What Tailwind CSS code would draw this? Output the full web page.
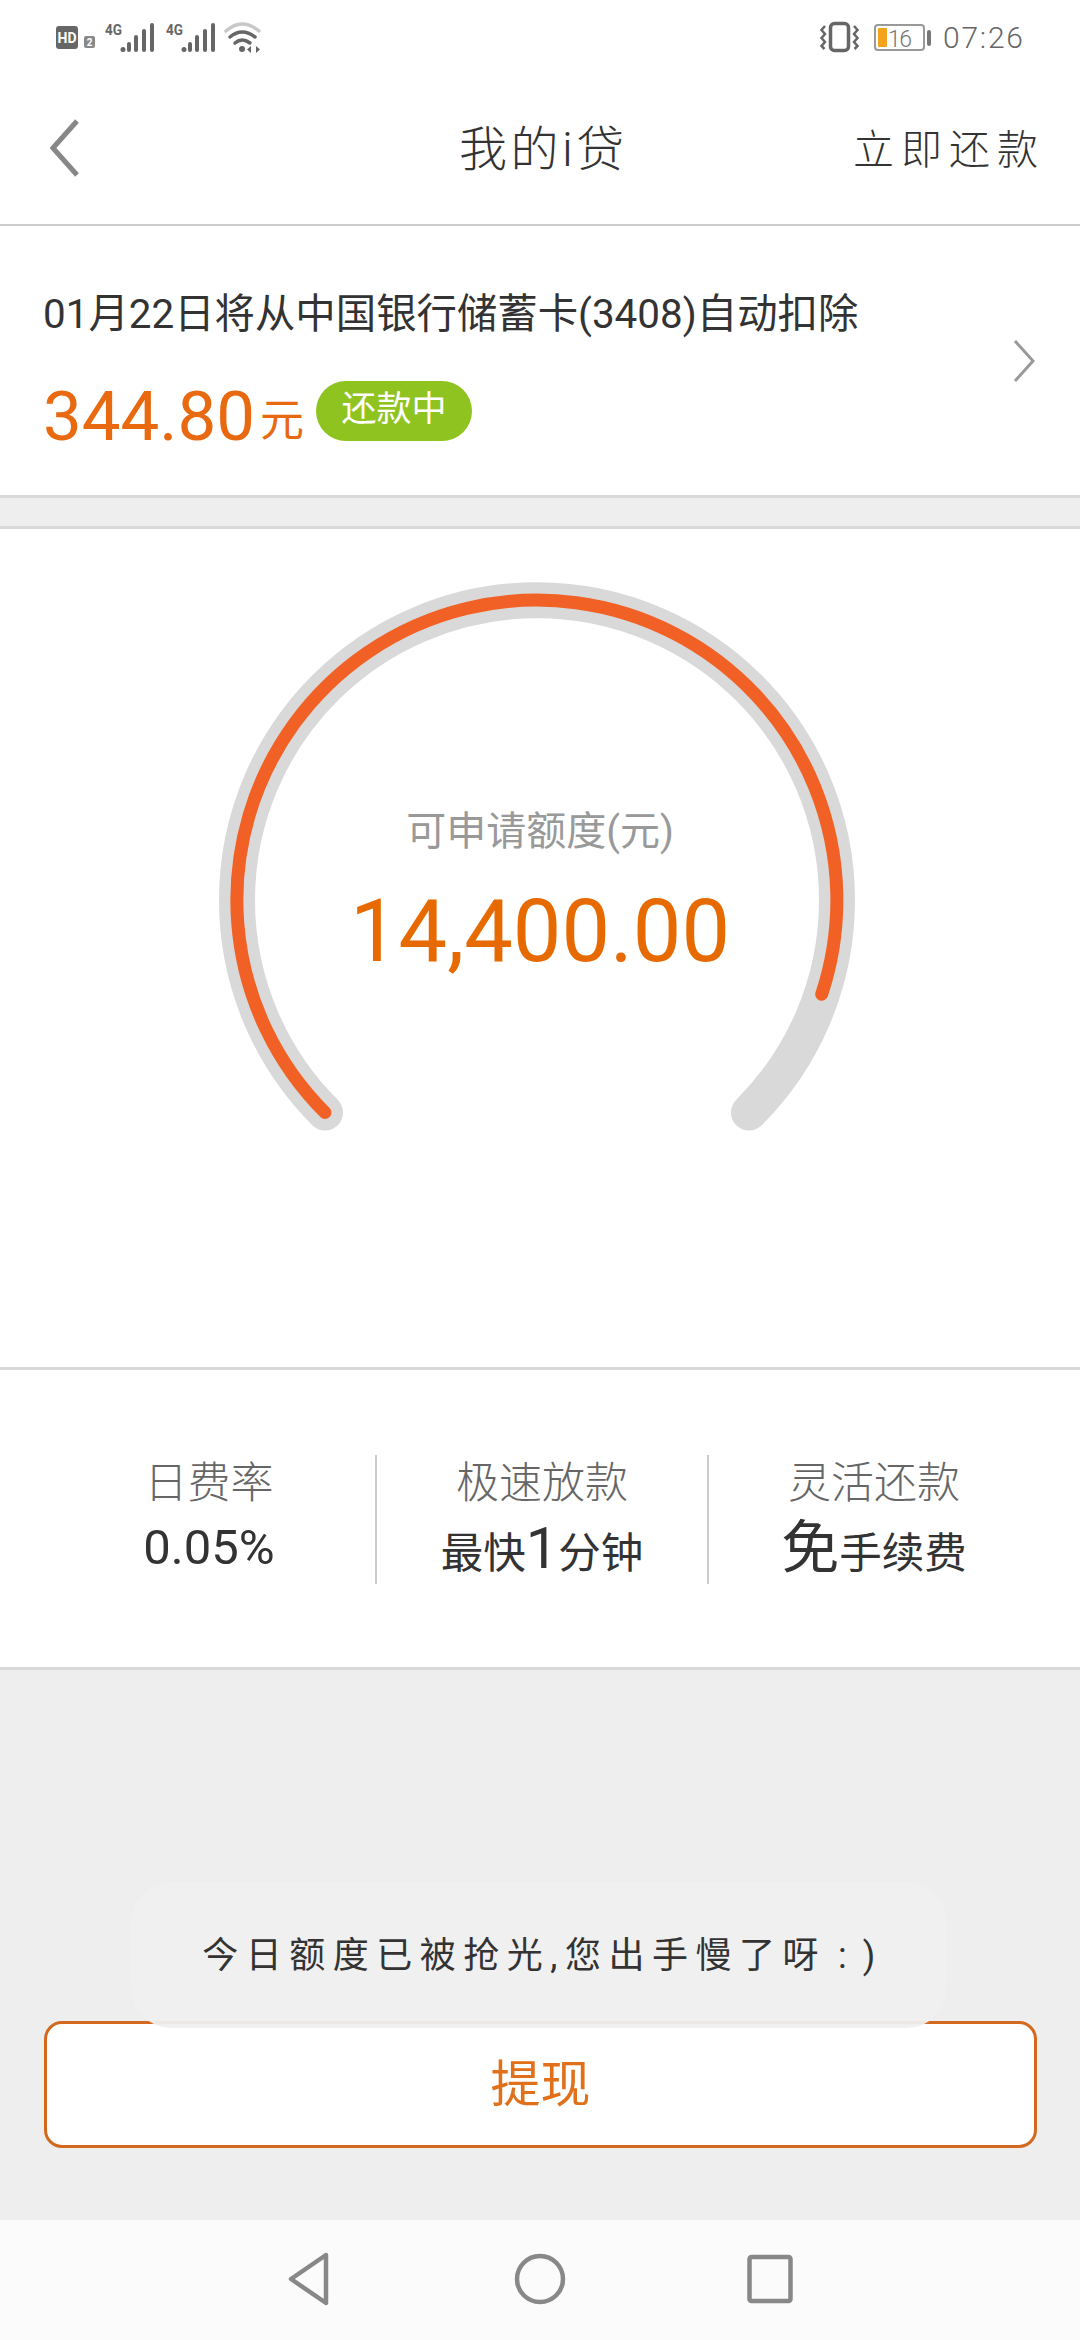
<!DOCTYPE html>
<html lang="zh-CN">
<head>
  <meta charset="UTF-8" />
  <meta name="viewport" content="width=device-width, initial-scale=1.0" />
  <title>我的i贷</title>
  <script src="https://cdn.jsdelivr.net/npm/@tailwindcss/browser@4"></script>
</head>
<body class="bg-white [font-family:Roboto,'Noto_Sans_CJK_SC',sans-serif]">
  <div class="w-[1080px] h-[2340px] flex flex-col overflow-hidden">

    <!-- status bar -->
    <div class="h-[75px] relative flex items-start justify-between shrink-0">
      <svg class="mt-[20px] ml-[54px]" width="214" height="36" viewBox="54 20 214 36">
        <rect x="56" y="26" width="22" height="23" rx="3" fill="#666" />
        <text x="67" y="43" text-anchor="middle" font-size="14" font-weight="700" fill="#fff" font-family="Roboto">HD</text>
        <rect x="84" y="36" width="11" height="12" rx="2" fill="#888" />
        <text x="89.5" y="46" text-anchor="middle" font-size="10" font-weight="700" fill="#fff" font-family="Roboto">2</text>
        <g fill="#666">
          <text x="105" y="35" font-size="14" font-weight="700" font-family="Roboto" textLength="17" lengthAdjust="spacingAndGlyphs">4G</text>
          <circle cx="123" cy="49.5" r="2.5" />
          <rect x="127" y="42" width="4" height="10" rx="2" />
          <rect x="134" y="35" width="4" height="17" rx="2" />
          <rect x="142" y="29" width="4" height="23" rx="2" />
          <rect x="150" y="23" width="4" height="29" rx="2" />
        </g>
        <g fill="#666">
          <text x="166" y="35" font-size="14" font-weight="700" font-family="Roboto" textLength="17" lengthAdjust="spacingAndGlyphs">4G</text>
          <circle cx="184" cy="49.5" r="2.5" />
          <rect x="188" y="42" width="4" height="10" rx="2" />
          <rect x="195" y="35" width="4" height="17" rx="2" />
          <rect x="203" y="29" width="4" height="23" rx="2" />
          <rect x="211" y="23" width="4" height="29" rx="2" />
        </g>
        <g fill="none" stroke-width="3.5" stroke-linecap="round">
          <path d="M226 31 Q242 17 259 31" stroke="#c8c8c8" />
          <path d="M230 37 Q242 27 255 37" stroke="#666" />
          <path d="M235 43 Q242 37 250 43" stroke="#666" />
        </g>
        <circle cx="242" cy="49" r="3" fill="#666" />
        <path d="M251 46 v7 l-4 -3.5z M256 46 v7 l4 -3.5z" fill="#666" />
      </svg>
      <div class="flex items-start">
        <svg class="mt-[20px]" width="212" height="36" viewBox="818 20 212 36">
          <rect x="830.5" y="23.5" width="18" height="27" rx="4" fill="none" stroke="#666" stroke-width="3.5" />
          <path d="M825 26 l-3.5 4 l3.5 4 l-3.5 4 l3.5 4 l-3.5 4 l3 3" fill="none" stroke="#666" stroke-width="2.5" />
          <path d="M854 26 l3.5 4 l-3.5 4 l3.5 4 l-3.5 4 l3.5 4 l-3 3" fill="none" stroke="#666" stroke-width="2.5" />
          <rect x="875" y="25" width="49" height="25" rx="3" fill="none" stroke="#999" stroke-width="2" />
          <rect x="878" y="28" width="9" height="19" rx="1" fill="#f5a21c" />
          <text x="888" y="47" font-size="23" font-weight="300" fill="#777" font-family="Roboto" textLength="24">16</text>
          <rect x="927" y="30" width="4" height="16" rx="2" fill="#777" />
          <text x="943" y="48" font-size="30" font-weight="300" fill="#666" font-family="Roboto" textLength="80">07:26</text>
        </svg>
        <div class="w-[50px]"></div>
      </div>
    </div>

    <!-- header -->
    <div class="h-[151px] shrink-0 border-b-2 border-[#cccccc] relative flex items-center justify-between pl-[50px] pr-[42px] pb-[3px]">
      <svg width="30" height="58" viewBox="0 0 30 58" fill="none"><path d="M27 2 L3 29 L27 56" stroke="#888" stroke-width="5" /></svg>
      <div class="absolute left-[459px] top-[50px] text-[48px] leading-[50px] tracking-[3.5px] font-light text-[#333]">我的i贷</div>
      <div class="text-[41px] leading-none tracking-[7px] -mr-[7px] mt-[5px] font-light text-[#333]">立即还款</div>
    </div>

    <!-- repayment notice -->
    <div class="h-[272px] shrink-0 border-b-[3px] border-[#d9d9d9] flex justify-between pl-[43px] pr-[45px]">
      <div class="pt-[65px]">
        <div class="text-[40.4px] leading-[48px] text-[#333]">01月22日将从中国银行储蓄卡(3408)自动扣除</div>
        <div class="flex items-center mt-[42px] h-[60px]">
          <span class="text-[69px] leading-none text-[#e8690f] mt-[10px]">344.80</span>
          <span class="text-[44px] leading-none text-[#e8690f] ml-[5px] mt-[20px]">元</span>
          <span class="ml-[12px] w-[156px] h-[60px] rounded-full bg-[#8fc31f] text-white text-[35px] leading-[58px] text-center">还款中</span>
        </div>
      </div>
      <svg class="self-center" width="22" height="42" viewBox="0 0 22 42" fill="none"><path d="M2 1 L20 21 L2 41" stroke="#999" stroke-width="3" /></svg>
    </div>

    <div class="h-[28px] shrink-0 bg-[#eeeeee]"></div>

    <!-- gauge -->
    <div class="h-[844px] shrink-0 border-y-[3px] border-[#d9d9d9] pt-[53px] relative">
      <svg class="ml-[219px]" width="636" height="560" viewBox="0 0 636 560" fill="none">
        <path d="M106 530.5 A300 300 0 1 1 530 530.5" stroke="#d9d9d9" stroke-width="36" stroke-linecap="round" />
        <path d="M106 530.5 A300 300 0 1 1 602.7 412.3" stroke="#f16126" stroke-width="13" stroke-linecap="round" />
      </svg>
      <div class="absolute inset-x-0 top-[279px] text-center text-[40px] leading-[48px] text-[#999]">可申请额度(元)</div>
      <div class="absolute inset-x-0 top-[353px] text-center text-[86.5px] leading-[100px] text-[#e66a00]">14,400.00</div>
    </div>

    <!-- stats -->
    <div class="h-[300px] shrink-0 border-b-[3px] border-[#d9d9d9] pl-[43px] flex items-center">
      <div class="grid grid-cols-[332px_332px_332px] h-[124px] -mt-[3px]">
        <div class="flex flex-col items-center">
          <div class="text-[43px] leading-[48px] mt-[4px] font-light text-[#666]">日费率</div>
          <div class="text-[49px] leading-[60px] mt-[11px] text-[#333]">0.05%</div>
        </div>
        <div class="flex flex-col items-center border-l-2 border-[#cccccc]">
          <div class="text-[43px] leading-[48px] mt-[4px] font-light text-[#666]">极速放款</div>
          <div class="text-[42.5px] leading-[60px] mt-[11px] text-[#333] flex items-baseline">最快<span class="text-[58px] leading-[60px]">1</span>分钟</div>
        </div>
        <div class="flex flex-col items-center border-l-2 border-[#cccccc]">
          <div class="text-[43px] leading-[48px] mt-[4px] font-light text-[#666]">灵活还款</div>
          <div class="text-[42.5px] leading-[60px] mt-[11px] text-[#333] flex items-baseline"><span class="text-[58px] leading-[60px]">免</span>手续费</div>
        </div>
      </div>
    </div>

    <!-- action area -->
    <div class="flex-1 bg-[#eeeeee] relative pt-[351px] pl-[44px]">
      <button class="block w-[993px] h-[127px] bg-white border-[3px] border-[#d2691e] rounded-[18px] text-[50px] leading-none text-[#e0701a]">提现</button>
      <div class="absolute left-[131px] top-[212px] w-[816px] h-[146px] rounded-[40px] bg-[#efefef]/95 flex items-center justify-center pt-[2px] pl-[7px] text-[36px] tracking-[7.5px] text-[#333]">今日额度已被抢光,您出手慢了呀<span class="ml-[12px] tracking-[16px]">:</span><span>)</span></div>
    </div>

    <!-- nav bar -->
    <div class="h-[120px] shrink-0 bg-[#fbfbfb] flex items-center pb-[3px] pl-[287px]">
      <svg width="44" height="54" viewBox="0 0 44 54" fill="none"><path d="M39 3 L4 27 L39 51 Z" stroke="#888" stroke-width="4.5" stroke-linejoin="round" /></svg>
      <svg class="ml-[183px]" width="52" height="52" viewBox="0 0 52 52" fill="none"><circle cx="26" cy="26" r="23" stroke="#888" stroke-width="4.5" /></svg>
      <svg class="ml-[181px]" width="46" height="50" viewBox="0 0 46 50" fill="none"><rect x="2.5" y="3" width="41" height="44" rx="2" stroke="#888" stroke-width="4.5" /></svg>
    </div>
  </div>
</body>
</html>
